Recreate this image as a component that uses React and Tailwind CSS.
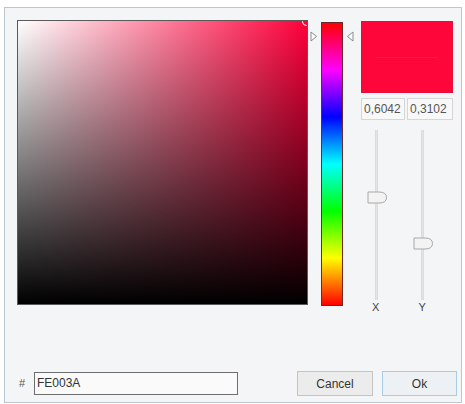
import React from 'react'

const HUE = 'linear-gradient(to bottom, #ff0000 0%, #ff00ff 16.7%, #0000ff 33.3%, #00ffff 50%, #00ff00 66.7%, #ffff00 83.3%, #ff0000 100%)'

const Thumb = () => (
  <svg width="21" height="13" viewBox="0 0 21 13" className="block">
    <path d="M1 1 H12 Q19.5 1 19.5 6.5 Q19.5 12 12 12 H1 Z" fill="#f3f3f3" stroke="#a8a8a8" strokeWidth="1" />
  </svg>
)

const Slider = ({ top, label, offset }) => (
  <div className="relative h-[190px] w-[46px]">
    <div className={`absolute top-[10px] h-[170px] w-[3px] bg-[#e4e4e4] border-x border-[#dcdcdc] ${offset}`} />
    <div className={`absolute ${top} ${offset === 'left-[14px]' ? 'left-[6px]' : 'left-[6px]'}`}>
      <Thumb />
    </div>
    <span className={`absolute top-[182px] text-[11px] text-[#444] leading-none ${offset === 'left-[14px]' ? 'left-[11px]' : 'left-[11px]'}`}>
      {label}
    </span>
  </div>
)

export default function App() {
  return (
    <div className="w-[465px] h-[404px] bg-white pt-[7px] pl-[4px] pr-[3px]" style={{ fontFamily: '"Liberation Sans", Arial, sans-serif' }}>
      <div className="h-[396px] border border-[#bcc6d0] bg-[#f4f5f7] flex flex-col">
        {/* top row */}
        <div className="flex pt-[12px] pl-[12px]">
          {/* saturation / value square */}
          <div className="relative w-[291px] h-[285px] border border-[#5a5a5a] overflow-hidden"
            style={{ background: 'linear-gradient(to bottom, rgba(0,0,0,0), #000), linear-gradient(to right, #fff, #fe003a)' }}>
            <div className="absolute -top-[4px] -right-[4px] w-[9px] h-[9px] rounded-full border border-white" />
          </div>

          {/* hue bar */}
          <div className="relative w-[48px] h-[287px] flex justify-center pt-[2px]">
            <div className="w-[22px] h-[284px] border border-[#6a2a2a]" style={{ background: HUE }} />
            <svg className="absolute left-[2px] top-[11px]" width="8" height="11" viewBox="0 0 8 11">
              <path d="M1 1 L6.5 5.5 L1 10 Z" fill="#fff" stroke="#8a8a8a" strokeWidth="1" />
            </svg>
            <svg className="absolute left-[38px] top-[11px]" width="8" height="11" viewBox="0 0 8 11">
              <path d="M7 1 L1.5 5.5 L7 10 Z" fill="#fff" stroke="#8a8a8a" strokeWidth="1" />
            </svg>
          </div>

          {/* right column */}
          <div className="ml-[5px] w-[92px] pt-[1px] flex flex-col">
            <div className="relative h-[72px] bg-[#fe063a] border border-[#e0103a]">
              <div className="absolute left-[14px] right-[14px] top-[35px] h-px bg-[#ee2e52] opacity-60" />
            </div>
            <div className="flex gap-[2px] mt-[5px]">
              <div className="w-[44px] h-[22px] border border-[#d6d6d6] bg-[#f8f8f8] text-[12px] text-[#555] leading-[20px] pl-[2px] whitespace-nowrap overflow-hidden">0,6042</div>
              <div className="w-[46px] h-[22px] border border-[#d6d6d6] bg-[#f8f8f8] text-[12px] text-[#555] leading-[20px] pl-[2px] whitespace-nowrap overflow-hidden">0,3102</div>
            </div>
            <div className="flex">
              <Slider top="top-[71px]" label="X" offset="left-[14px]" />
              <div className="w-[1px]" />
              <Slider top="top-[117px]" label="Y" offset="left-[14px]" />
            </div>
          </div>
        </div>

        {/* bottom row */}
        <div className="mt-auto mb-[6px] flex items-center pl-[14px] pr-[4px]">
          <span className="text-[11px] text-[#555] w-[15px]">#</span>
          <div className="w-[204px] h-[23px] border border-[#6e6e6e] bg-[#fafafa] text-[12px] text-[#333] leading-[21px] pl-[2px]">FE003A</div>
          <button className="ml-[59px] w-[76px] h-[25px] border border-[#c4c4c4] bg-[#ececec] text-[12px] text-[#333]">Cancel</button>
          <button className="ml-[9px] w-[75px] h-[25px] border border-[#a9cbe8] bg-[#eef1f4] text-[12px] text-[#333]">Ok</button>
        </div>
      </div>
    </div>
  )
}
